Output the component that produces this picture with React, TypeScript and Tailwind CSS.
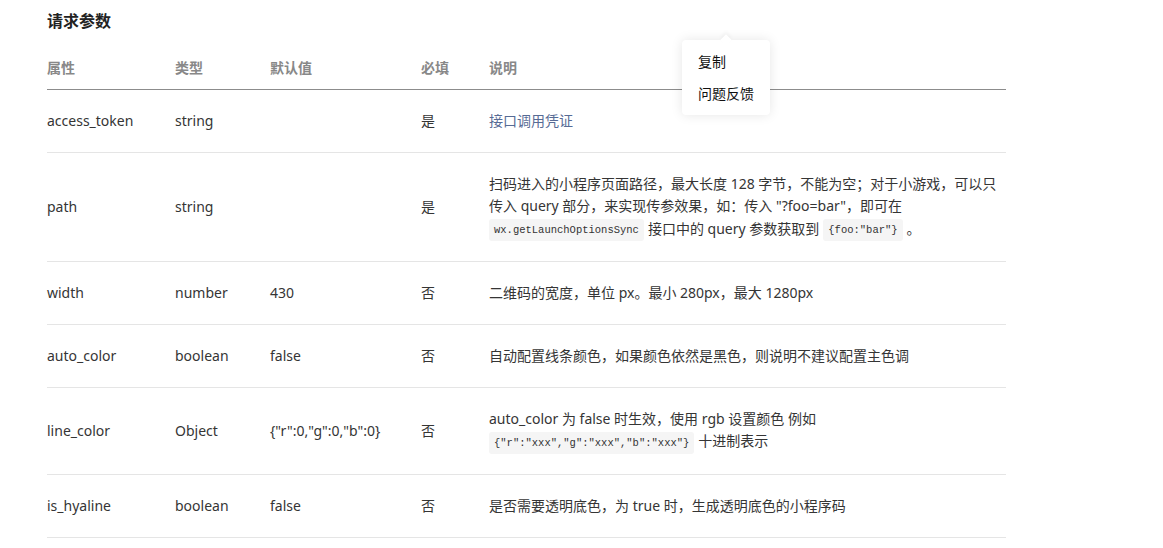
import React from "react";

const Code = ({ children, first }: { children: React.ReactNode; first?: boolean }) => (
  <code
    className={`${first ? "mr-[4px]" : "mx-[4px]"} inline-block rounded-[3px] bg-[#f5f5f5] px-[5px] leading-[22px] text-[10.5px] text-[#333] font-['Liberation_Mono',monospace] align-middle`}
  >
    {children}
  </code>
);

const rows: { name: string; type: string; def: string; req: string; desc: React.ReactNode; blue?: boolean; multi?: boolean }[] = [
  { name: "access_token", type: "string", def: "", req: "是", desc: "接口调用凭证", blue: true },
  {
    name: "path",
    type: "string",
    def: "",
    req: "是",
    multi: true,
    desc: (
      <>
        扫码进入的小程序页面路径，最大长度 128 字节，不能为空；对于小游戏，可以只
        <br />
        传入 query 部分，来实现传参效果，如：传入 "?foo=bar"，即可在
        <br />
        <Code first>wx.getLaunchOptionsSync</Code>接口中的 query 参数获取到<Code>{'{foo:"bar"}'}</Code>。
      </>
    ),
  },
  { name: "width", type: "number", def: "430", req: "否", desc: "二维码的宽度，单位 px。最小 280px，最大 1280px" },
  { name: "auto_color", type: "boolean", def: "false", req: "否", desc: "自动配置线条颜色，如果颜色依然是黑色，则说明不建议配置主色调" },
  {
    name: "line_color",
    type: "Object",
    def: '{"r":0,"g":0,"b":0}',
    req: "否",
    multi: true,
    desc: (
      <>
        auto_color 为 false 时生效，使用 rgb 设置颜色 例如
        <br />
        <Code first>{'{"r":"xxx","g":"xxx","b":"xxx"}'}</Code>十进制表示
      </>
    ),
  },
  { name: "is_hyaline", type: "boolean", def: "false", req: "否", desc: "是否需要透明底色，为 true 时，生成透明底色的小程序码" },
];

export default function App() {
  return (
    <div className="relative w-[1163px] h-[548px] overflow-hidden bg-white font-['Noto_Sans','Noto_Sans_CJK_SC',sans-serif] text-[14px] text-[#353535]">
      <div className="pl-[47px] pt-[10px]">
        <h2 className="text-[16px] leading-[22px] font-bold text-[#222]">请求参数</h2>
        <table className="mt-[15px] w-[959px] table-fixed border-collapse">
          <colgroup>
            <col className="w-[128px]" />
            <col className="w-[95px]" />
            <col className="w-[151px]" />
            <col className="w-[68px]" />
            <col className="w-[517px]" />
          </colgroup>
          <thead>
            <tr className="border-b border-[#8c8c8c] text-left text-[#888] font-bold">
              <th className="pt-[10px] pb-[10px] leading-[22px] font-bold">属性</th>
              <th className="pt-[10px] pb-[10px] leading-[22px] font-bold">类型</th>
              <th className="pt-[10px] pb-[10px] leading-[22px] font-bold">默认值</th>
              <th className="pt-[10px] pb-[10px] leading-[22px] font-bold">必填</th>
              <th className="pt-[10px] pb-[10px] leading-[22px] font-bold">说明</th>
            </tr>
          </thead>
          <tbody>
            {rows.map((r) => {
              const lh = r.multi ? "leading-[22.4px]" : "leading-[22px]";
              return (
                <tr key={r.name} className="border-b border-[#e5e5e5] align-middle">
                  <td className={`py-[20px] ${lh}`}>{r.name}</td>
                  <td className={`py-[20px] ${lh}`}>{r.type}</td>
                  <td className={`py-[20px] ${lh}`}>{r.def}</td>
                  <td className={`py-[20px] ${lh}`}>{r.req}</td>
                  <td className={`py-[20px] ${lh} ${r.blue ? "text-[#576b95]" : ""}`}>{r.desc}</td>
                </tr>
              );
            })}
          </tbody>
        </table>
      </div>

      <div className="absolute left-[682px] top-[40px] w-[88px] rounded-[4px] bg-white pt-[6px] pb-[5px] pl-[16px] shadow-[0_0_12px_rgba(0,0,0,0.1)]">
        <div className="absolute left-[40px] top-[-4px] h-[8px] w-[8px] rotate-45 bg-white shadow-[-2px_-2px_4px_rgba(0,0,0,0.04)]" />
        <div className="relative leading-[32px] text-[#111]">复制</div>
        <div className="relative leading-[32px] text-[#111]">问题反馈</div>
      </div>
    </div>
  );
}
